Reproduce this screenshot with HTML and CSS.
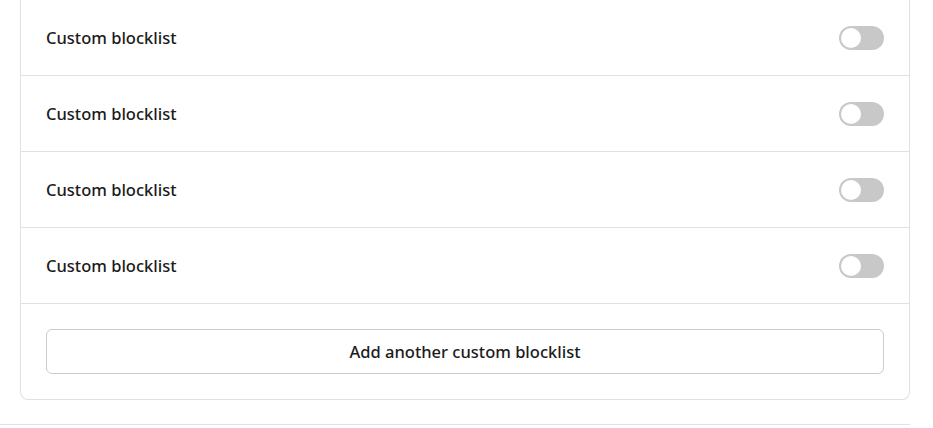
FILE: index.html
```html
<!DOCTYPE html>
<html>
<head>
<meta charset="utf-8">
<link rel="stylesheet" href="styles.css">
</head>
<body>
<div class="page">
  <section class="card">
    <div class="row"><span class="label">Custom blocklist</span><span class="toggle"><span class="knob"></span></span></div>
    <div class="row"><span class="label">Custom blocklist</span><span class="toggle"><span class="knob"></span></span></div>
    <div class="row"><span class="label">Custom blocklist</span><span class="toggle"><span class="knob"></span></span></div>
    <div class="row"><span class="label">Custom blocklist</span><span class="toggle"><span class="knob"></span></span></div>
    <div class="footer"><button class="add-btn" type="button">Add another custom blocklist</button></div>
  </section>
  <div class="next-section"></div>
</div>
</body>
</html>
```
FILE: styles.css
```css
html, body {
  margin: 0;
  padding: 0;
  background: #ffffff;
}
body {
  font-family: "Noto Sans", "Open Sans", sans-serif;
  color: #1b1b1b;
}
.page {
  width: 910px;
}
.card {
  margin-left: 20px;
  border: 1px solid #e0e0e0;
  border-top: none;
  border-radius: 0 0 8px 8px;
}
.row {
  height: 75px;
  border-bottom: 1px solid #e0e0e0;
  display: flex;
  align-items: center;
  justify-content: space-between;
  padding: 0 25px;
}
.label {
  font-size: 16.5px;
  font-weight: 500;
}
.toggle {
  width: 45px;
  height: 24px;
  border-radius: 12px;
  background: #c8c8c8;
  display: flex;
  align-items: center;
  padding-left: 2px;
  box-sizing: border-box;
}
.knob {
  width: 20px;
  height: 20px;
  border-radius: 50%;
  background: #ffffff;
}
.footer {
  padding: 25px;
}
.add-btn {
  display: block;
  width: 100%;
  height: 45px;
  border: 1px solid #cccccc;
  border-radius: 6px;
  background: #ffffff;
  font-family: inherit;
  font-size: 16.5px;
  font-weight: 500;
  color: #1b1b1b;
}
.next-section {
  margin-top: 24px;
  border-top: 1px solid #e0e0e0;
}
```
